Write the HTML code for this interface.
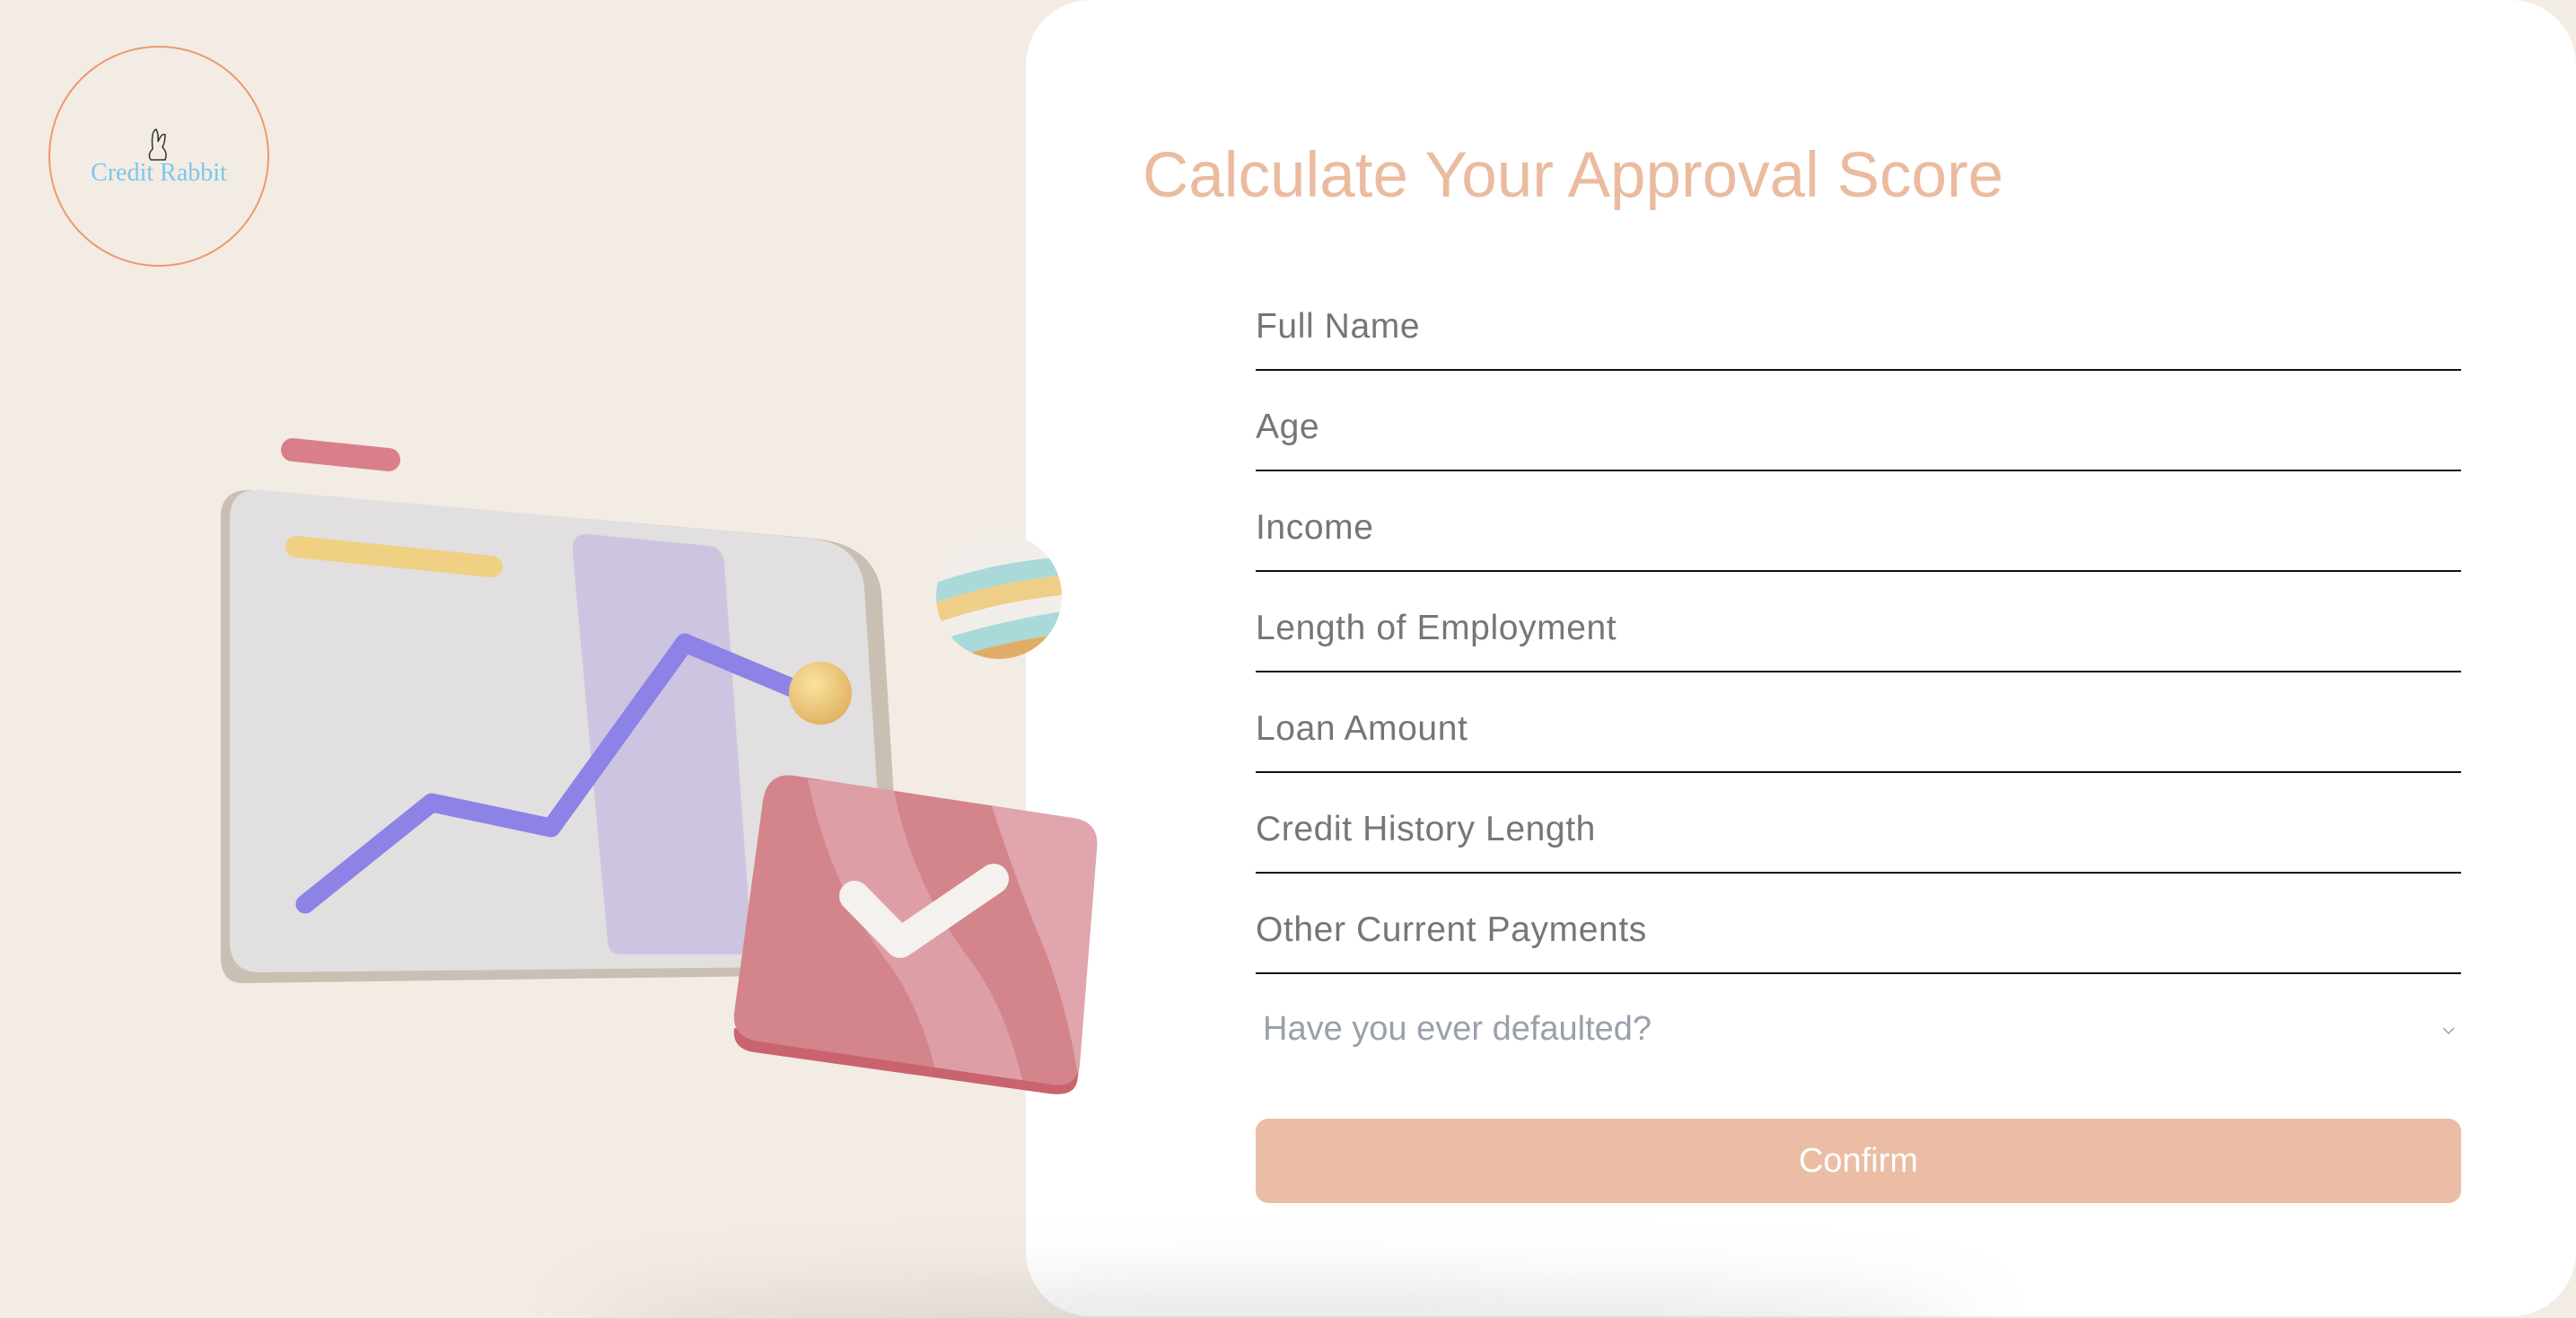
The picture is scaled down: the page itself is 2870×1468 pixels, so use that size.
<!DOCTYPE html>
<html style="overflow:hidden;width:2870px;height:1468px"><head><meta charset="utf-8"><style>
html,body{margin:0;padding:0}
body{width:2870px;height:1468px;background:#f3ece4;position:relative;overflow:hidden;font-family:"Liberation Sans",sans-serif}
.panel{position:absolute;left:1143px;top:0;width:1727px;height:1466px;background:#fff;border-radius:72px;overflow:hidden}
.shadow{position:absolute;width:1550px;height:80px;border-radius:50%;background:rgba(120,120,120,.22);filter:blur(40px)}
h1{position:absolute;left:1273px;top:155px;margin:0;font-weight:normal;font-size:71px;color:#ebbb9f}
.f{position:absolute;left:1399px;width:1343px;height:2px;background:#111}
.l{position:absolute;left:1399px;font-size:39px;color:#767676;letter-spacing:0.6px}
.sel{position:absolute;left:1407px;top:1125px;font-size:38px;color:#9aa0ab}
.btn{position:absolute;left:1399px;top:1246px;width:1343px;height:94px;border-radius:14px;background:#eabda4;color:#fff;font-size:38px;text-align:center;line-height:94px}
</style></head><body>
<div class="shadow" style="left:650px;top:1440px"></div>
<div class="panel"><div class="shadow" style="left:-493px;top:1440px"></div></div>
<svg style="position:absolute;left:0;top:0" width="1300" height="1468">
 <defs>
  <radialGradient id="yb" cx="0.4" cy="0.35" r="0.7"><stop offset="0" stop-color="#fbe3a0"/><stop offset="1" stop-color="#e0b060"/></radialGradient>
  <clipPath id="bc"><circle cx="1113" cy="664" r="70"/></clipPath>
  <clipPath id="rc"><path d="M885 864 L1195 911 Q1225 915 1222 945 L1203 1185 Q1200 1212 1172 1208 L845 1160 Q815 1155 818 1128 L850 892 Q855 860 885 864Z"/></clipPath>
 </defs>
 <circle cx="177" cy="174" r="122" fill="none" stroke="#eb9a70" stroke-width="2"/>
 <text x="177" y="201" text-anchor="middle" font-family="Liberation Serif,serif" font-size="28" fill="#7cc7ee">Credit Rabbit</text>
 <path d="M170 166 q-2 -20 4 -22 q3 6 2 14 q4 -10 8 -8 q0 8 -3 14 q6 6 3 14 h-16 q-4 -6 2 -12z" fill="none" stroke="#333" stroke-width="1.5"/>
 <line x1="326" y1="501" x2="433" y2="512" stroke="#d97f8a" stroke-width="26" stroke-linecap="round"/>
 <path d="M285 546 L910 600 Q975 608 982 660 L1008 1085 L270 1095 Q246 1095 246 1065 L246 575 Q246 543 285 546Z" fill="#c9bfb2"/>
 <path d="M292 546 L905 600 Q958 606 963 655 L990 1076 L290 1083 Q256 1083 256 1048 L256 578 Q256 543 292 546Z" fill="#e1dfdf"/>
 <path d="M655 595 L790 608 Q805 610 807 628 L838 1063 L690 1063 Q678 1063 677 1048 L638 615 Q636 594 655 595Z" fill="#c9c0e2" opacity=".85"/>
 <line x1="330" y1="609" x2="548" y2="631" stroke="#f0d083" stroke-width="24" stroke-linecap="round"/>
 <polyline points="340,1007 481,894 614,922 763,716 887,768" fill="none" stroke="#8d82e6" stroke-width="21" stroke-linecap="round" stroke-linejoin="round"/>
 <circle cx="914" cy="772" r="35" fill="url(#yb)"/>
 <g clip-path="url(#bc)">
  <rect x="1040" y="590" width="150" height="150" fill="#f1eeea"/>
  <path d="M1040 650 Q1110 625 1190 620 L1190 640 Q1110 648 1040 672Z" fill="#a9d9d8"/>
  <path d="M1040 672 Q1110 648 1190 640 L1190 662 Q1110 670 1040 695Z" fill="#efcf88"/>
  <path d="M1040 715 Q1110 692 1190 680 L1190 705 Q1110 715 1040 740Z" fill="#a9d9d8"/>
  <path d="M1040 740 Q1110 715 1190 705 L1190 740 L1040 740Z" fill="#e0ad68"/>
 </g>
 <path d="M845 1150 L1172 1198 Q1200 1202 1203 1185 L1200 1205 Q1196 1222 1168 1218 L840 1172 Q815 1168 818 1145Z" fill="#c9646e"/>
 <g clip-path="url(#rc)">
  <rect x="800" y="850" width="440" height="380" fill="#d4848b"/>
  <path d="M900 868 Q925 990 995 1080 Q1035 1140 1050 1230 L1145 1230 Q1125 1130 1085 1075 Q1015 985 995 875Z" fill="#de9ea6"/>
  <path d="M1105 898 Q1135 990 1165 1060 Q1195 1140 1205 1230 L1240 1230 L1240 900Z" fill="#e0a5ad"/>
 </g>
 <polyline points="952,998 1003,1050 1107,979" fill="none" stroke="#f4f1ee" stroke-width="34" stroke-linecap="round" stroke-linejoin="round"/>
</svg>
<h1>Calculate Your Approval Score</h1>
<div class="l" style="top:342px">Full Name</div><div class="f" style="top:411px"></div>
<div class="l" style="top:454px">Age</div><div class="f" style="top:523px"></div>
<div class="l" style="top:566px">Income</div><div class="f" style="top:635px"></div>
<div class="l" style="top:678px">Length of Employment</div><div class="f" style="top:747px"></div>
<div class="l" style="top:790px">Loan Amount</div><div class="f" style="top:859px"></div>
<div class="l" style="top:902px">Credit History Length</div><div class="f" style="top:971px"></div>
<div class="l" style="top:1014px">Other Current Payments</div><div class="f" style="top:1083px"></div>
<div class="sel">Have you ever defaulted?</div>
<svg style="position:absolute;left:2720px;top:1142px" width="16" height="12"><polyline points="2,3 8,9 14,3" fill="none" stroke="#9aa0ab" stroke-width="1.5"/></svg>
<div class="btn">Confirm</div>
</body></html>
